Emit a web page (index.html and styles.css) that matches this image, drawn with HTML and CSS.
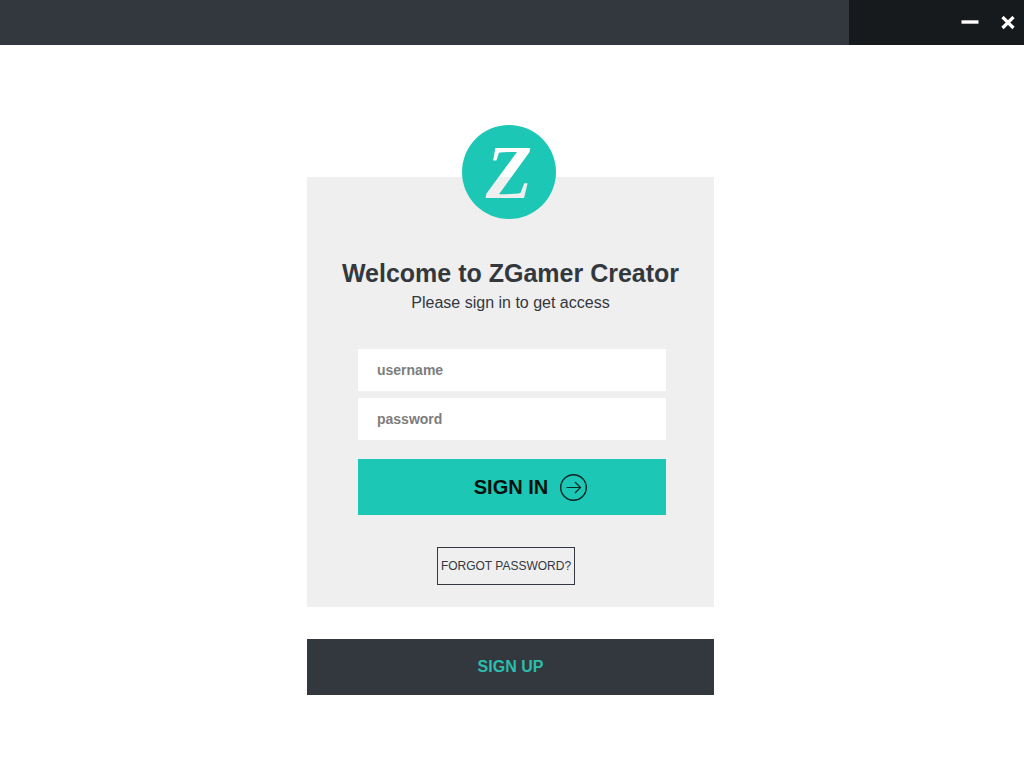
FILE: index.html
```html
<!DOCTYPE html>
<html lang="en">
<head>
  <meta charset="UTF-8">
  <meta name="viewport" content="width=device-width, initial-scale=1.0">
  <title>ZGamer Creator</title>
  <link rel="stylesheet" href="styles.css">
</head>
<body>
  <header class="titlebar">
    <div class="window-controls">
      <button type="button" aria-label="Minimize">
        <svg width="18" height="18" viewBox="0 0 18 18"><path d="M.5 8h17" stroke="#fff" stroke-width="3.4"/></svg>
      </button>
      <button type="button" aria-label="Close">
        <svg width="14" height="14" viewBox="0 0 14 14"><path d="M1.5 1l11 11M12.5 1l-11 11" stroke="#fff" stroke-width="3.2"/></svg>
      </button>
    </div>
  </header>

  <main class="login">
    <section class="card">
      <div class="logo"><span>Z</span></div>
      <h1>Welcome to ZGamer Creator</h1>
      <p>Please sign in to get access</p>

      <form class="login-form">
        <input type="text" placeholder="username" aria-label="username">
        <input type="password" placeholder="password" aria-label="password">
        <button type="submit" class="sign-in">
          SIGN IN
          <svg width="28" height="28" viewBox="0 0 28 28" fill="none" stroke="#0b2623" stroke-width="1.4">
            <circle cx="13.5" cy="14.5" r="12.8"/>
            <path d="M6.5 14.5h14M15 9l5.500 5.500L15 20" stroke-width="1.2"/>
          </svg>
        </button>
      </form>

      <button type="button" class="forgot">FORGOT PASSWORD?</button>
    </section>

    <button type="button" class="sign-up">SIGN UP</button>
  </main>
</body>
</html>
```

FILE: styles.css
```css
* {
  box-sizing: border-box;
}

body {
  margin: 0;
  font-family: "Liberation Sans", Arial, sans-serif;
  background: #fff;
  color: #33383f;
}

button {
  font-family: inherit;
  border: none;
  border-radius: 0;
  cursor: pointer;
}

/* Window title bar */
.titlebar {
  display: flex;
  justify-content: flex-end;
  height: 45px;
  background: #33383f;
}

.window-controls {
  display: flex;
  align-items: center;
  justify-content: flex-end;
  gap: 22px;
  width: 175px;
  padding-right: 9px;
  background: #171a1c;
}

.window-controls button {
  display: flex;
  padding: 0;
  background: none;
}

/* Login box */
.login {
  display: flex;
  flex-direction: column;
  align-items: center;
  gap: 32px;
  padding: 132px 3px 32px 0;
}

.card {
  display: flex;
  flex-direction: column;
  align-items: center;
  width: 100%;
  max-width: 407px;
  padding-bottom: 22px;
  background: #efefef;
}

.logo {
  display: flex;
  align-items: center;
  justify-content: center;
  width: 94px;
  height: 94px;
  margin: -52px 3px 0 0;
  border-radius: 50%;
  background: #1cc7b5;
}

/* The letter shows the page above and the card below */
.logo span {
  padding: 0 4px;
  font-family: "Liberation Serif", serif;
  font-size: 76px;
  font-style: italic;
  font-weight: bold;
  line-height: 94px;
  color: transparent;
  background: linear-gradient(#fff 52px, #efefef 52px);
  -webkit-background-clip: text;
  background-clip: text;
}

h1 {
  margin: 39px 0 0;
  font-size: 25px;
  line-height: 30px;
}

p {
  margin: 5px 0 0;
  font-size: 16px;
  line-height: 20px;
}

.login-form {
  display: flex;
  flex-direction: column;
  gap: 7px;
  width: 100%;
  padding: 36px 48px 0 51px;
}

.login-form input {
  width: 100%;
  height: 42px;
  padding: 0 19px;
  border: none;
  font-family: inherit;
  font-size: 14px;
  font-weight: bold;
  color: #33383f;
  background: #fff;
}

.login-form input::placeholder {
  color: #7d7d7d;
}

.sign-in {
  display: flex;
  align-items: center;
  justify-content: center;
  gap: 12px;
  height: 56px;
  margin-top: 12px;
  padding: 0 0 0 38px;
  font-size: 20px;
  font-weight: bold;
  color: #06110f;
  background: #1cc7b5;
}

.forgot {
  height: 38px;
  margin: 32px 9px 0 0;
  padding: 0 3px;
  border: 1px solid #33383f;
  font-size: 12px;
  color: #33383f;
  background: none;
}

.sign-up {
  width: 100%;
  max-width: 407px;
  height: 56px;
  font-size: 16px;
  font-weight: bold;
  color: #2bbdad;
  background: #33383f;
}
```
